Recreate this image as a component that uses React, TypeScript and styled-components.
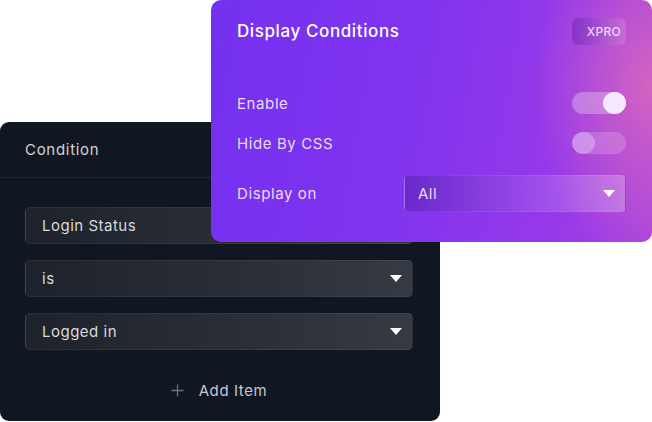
import React from "react";
import styled, { createGlobalStyle } from "styled-components";

const Global = createGlobalStyle`
  html, body { margin: 0; padding: 0; background: #ffffff; }
  body { font-family: Inter, "Noto Sans", sans-serif; -webkit-font-smoothing: antialiased; }
`;

const Stage = styled.div`
  position: relative;
  width: 652px;
  height: 422px;
  overflow: hidden;
`;

const DarkCard = styled.div`
  margin-top: 122px;
  width: 440px;
  height: 299px;
  box-sizing: border-box;
  background: #111722;
  border-radius: 9px;
  display: flex;
  flex-direction: column;
`;

const DarkHeader = styled.div`
  height: 56px;
  box-sizing: border-box;
  padding-left: 25px;
  display: flex;
  align-items: center;
  border-bottom: 1px solid rgba(255, 255, 255, 0.07);
  color: #cfd2d7;
  font-size: 15px;
  letter-spacing: 0.7px;
`;

const DarkBody = styled.div`
  padding: 29px 27px 0 25px;
  display: flex;
  flex-direction: column;
  gap: 16px;
`;

const Field = styled.div`
  height: 37px;
  box-sizing: border-box;
  border-radius: 5px;
  border: 1px solid rgba(255, 255, 255, 0.06);
  background: linear-gradient(90deg, #1d222b 0%, #2a2f38 60%, #363b43 100%);
  display: flex;
  align-items: center;
  justify-content: space-between;
  padding: 0 10px 0 16px;
  color: #d7dade;
  font-size: 15px;
  letter-spacing: 0.5px;
`;

const Caret = styled.span`
  width: 0;
  height: 0;
  border-left: 6px solid transparent;
  border-right: 6px solid transparent;
  border-top: 7px solid #ffffff;
`;

const AddRow = styled.div`
  margin-top: 15px;
  display: flex;
  justify-content: center;
  align-items: center;
  gap: 15px;
  color: #c5c8cd;
  font-size: 15px;
  letter-spacing: 0.6px;
`;

const PurpleCard = styled.div`
  position: absolute;
  top: 0;
  left: 211px;
  width: 441px;
  height: 242px;
  box-sizing: border-box;
  border-radius: 10px;
  background:
    radial-gradient(ellipse 120px 180px at 100% 35%, rgba(222, 108, 185, 0.8), rgba(222, 108, 185, 0) 100%),
    linear-gradient(100deg, #7430f0 0%, #8134ee 45%, #9739e9 80%, #a944df 100%);
  padding: 0 26px 0 26px;
  display: flex;
  flex-direction: column;
  color: #ffffff;
`;

const TitleRow = styled.div`
  height: 62px;
  display: flex;
  align-items: center;
  justify-content: space-between;
`;

const Title = styled.div`
  font-size: 17px;
  font-weight: 500;
  letter-spacing: 0.6px;
`;

const Badge = styled.div`
  width: 54px;
  height: 27px;
  box-sizing: border-box;
  border-radius: 6px;
  background: linear-gradient(90deg, rgba(70, 20, 150, 0.35), rgba(255, 255, 255, 0.14));
  display: flex;
  align-items: center;
  justify-content: flex-end;
  padding-right: 5px;
  font-size: 12px;
  font-weight: 500;
  letter-spacing: 0.3px;
  color: #ead7f7;
`;

const Rows = styled.div`
  margin-top: 30px;
  display: flex;
  flex-direction: column;
`;

const Row = styled.div<{ $h: number; $gap: number }>`
  height: ${(p) => p.$h}px;
  margin-top: ${(p) => p.$gap}px;
  display: flex;
  align-items: center;
  justify-content: space-between;
`;

const Label = styled.div`
  font-size: 15px;
  color: #eadcf8;
  letter-spacing: 0.6px;
`;

const Toggle = styled.div<{ $on: boolean }>`
  width: 54px;
  height: 22px;
  border-radius: 11px;
  background: rgba(255, 255, 255, ${(p) => (p.$on ? 0.28 : 0.18)});
  display: flex;
  justify-content: ${(p) => (p.$on ? "flex-end" : "flex-start")};
`;

const Knob = styled.div<{ $on: boolean }>`
  width: 23px;
  height: 22px;
  border-radius: 50%;
  background: ${(p) => (p.$on ? "#f6e8fc" : "rgba(255,255,255,0.28)")};
`;

const Select = styled.div`
  width: 222px;
  height: 37px;
  box-sizing: border-box;
  border-radius: 5px;
  border: 1px solid rgba(255, 255, 255, 0.08);
  background: linear-gradient(90deg, rgba(60, 20, 140, 0.35) 0%, rgba(255, 255, 255, 0.1) 60%, rgba(255, 255, 255, 0.25) 100%);
  display: flex;
  align-items: center;
  justify-content: space-between;
  padding: 0 10px 0 13px;
  font-size: 15px;
  letter-spacing: 0.5px;
  color: #eadcf8;
`;

const PlusIcon = () => (
  <svg width="13" height="13" viewBox="0 0 13 13">
    <path d="M6.5 0.5v12M0.5 6.5h12" stroke="#6b7079" strokeWidth="1.3" />
  </svg>
);

export default function App() {
  return (
    <Stage>
      <Global />
      <DarkCard>
        <DarkHeader>Condition</DarkHeader>
        <DarkBody>
          <Field>
            Login Status
            <Caret />
          </Field>
          <Field>
            is
            <Caret />
          </Field>
          <Field>
            Logged in
            <Caret />
          </Field>
          <AddRow>
            <PlusIcon />
            Add Item
          </AddRow>
        </DarkBody>
      </DarkCard>
      <PurpleCard>
        <TitleRow>
          <Title>Display Conditions</Title>
          <Badge>XPRO</Badge>
        </TitleRow>
        <Rows>
          <Row $h={22} $gap={0}>
            <Label>Enable</Label>
            <Toggle $on>
              <Knob $on />
            </Toggle>
          </Row>
          <Row $h={22} $gap={18}>
            <Label>Hide By CSS</Label>
            <Toggle $on={false}>
              <Knob $on={false} />
            </Toggle>
          </Row>
          <Row $h={37} $gap={21}>
            <Label>Display on</Label>
            <Select>
              All
              <Caret />
            </Select>
          </Row>
        </Rows>
      </PurpleCard>
    </Stage>
  );
}
